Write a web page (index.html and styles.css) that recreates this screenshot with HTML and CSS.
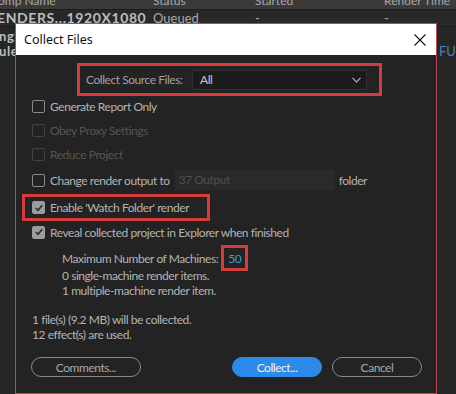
FILE: index.html
```html
<!DOCTYPE html>
<html>
<head>
<meta charset="utf-8">
<link rel="stylesheet" href="styles.css">
</head>
<body>
<div class="app">
  <div class="thead">
    <span class="c1">omp Name</span><span class="c2">Status</span><span class="c3">Started</span><span class="c4">Render Time</span>
  </div>
  <div class="trow">
    <span class="c1 bold">ENDERS...1920X1080</span><span class="c2">Queued</span><span class="c3">-</span><span class="c4">-</span>
  </div>
  <div class="side">
    <div class="bold">ngs</div>
    <div class="bold">ule</div>
  </div>
  <div class="ful">FUL</div>

  <div class="dialog">
    <div class="titlebar">
      <span class="title">Collect Files</span>
      <svg class="close" width="12" height="12" viewBox="0 0 12 12"><path d="M0.5 0.5 L11.5 11.5 M11.5 0.5 L0.5 11.5" stroke="#111" stroke-width="1.1" fill="none"/></svg>
    </div>
    <div class="body">
      <div class="source hl">
        <span class="src-label">Collect Source Files:</span>
        <div class="select"><span>All</span>
          <svg width="9" height="6" viewBox="0 0 9 6"><path d="M0.5 0.8 L4.5 4.8 L8.5 0.8" stroke="#b0b0b0" stroke-width="1.2" fill="none"/></svg>
        </div>
      </div>
      <div class="opt r1"><span class="cb"></span><span>Generate Report Only</span></div>
      <div class="opt r2 dis"><span class="cb"></span><span>Obey Proxy Settings</span></div>
      <div class="opt r3 dis"><span class="cb"></span><span>Reduce Project</span></div>
      <div class="opt r4"><span class="cb"></span><span>Change render output to</span><span class="field">37 Output</span><span class="folder">folder</span></div>
      <div class="opt r5 hl watch"><span class="cb on"><svg width="10" height="10" viewBox="0 0 10 10"><path d="M1.8 5 L4 7.3 L8.3 2.3" stroke="#2a2a2a" stroke-width="1.6" fill="none"/></svg></span><span>Enable 'Watch Folder' render</span></div>
      <div class="opt r6"><span class="cb on"><svg width="10" height="10" viewBox="0 0 10 10"><path d="M1.8 5 L4 7.3 L8.3 2.3" stroke="#2a2a2a" stroke-width="1.6" fill="none"/></svg></span><span>Reveal collected project in Explorer when finished</span></div>
      <div class="machines">
        <div class="maxrow"><span>Maximum Number of Machines:</span><span class="num hl">50</span></div>
        <div class="line">0 single-machine render items.</div>
        <div>1 multiple-machine render item.</div>
      </div>
      <div class="summary">
        <div>1 file(s) (9.2 MB) will be collected.</div>
        <div>12 effect(s) are used.</div>
      </div>
      <div class="buttons">
        <button class="btn">Comments...</button>
        <div class="right">
          <button class="btn primary">Collect...</button>
          <button class="btn">Cancel</button>
        </div>
      </div>
    </div>
  </div>
</div>
</body>
</html>
```
FILE: styles.css
```css
* { box-sizing: border-box; }
html, body { margin: 0; padding: 0; }
body {
  width: 456px; height: 394px; overflow: hidden;
  background: #262626;
  font-family: "Lato", "Open Sans", sans-serif;
  font-size: 12px;
  color: #b4b4b4;
}
.app { position: relative; width: 456px; height: 394px; }
.thead {
  height: 10px; background: #3a3a3a; position: relative;
  font-size: 12px; line-height: 10px; color: #a8a8a8; overflow: hidden;
  border-bottom: 1px solid #1c1c1c;
}
.thead span, .trow span { position: absolute; top: -4px; white-space: nowrap; }
.trow span { top: 0; }
.c1 { left: 0; }
.c2 { left: 153px; }
.c3 { left: 255px; }
.c4 { left: 384px; }
.thead .c1 { left: -2px; }
.trow {
  height: 17px; position: relative; background: #282828;
  line-height: 16px; font-size: 13px; color: #a8a8a8;
  border-bottom: 1px solid #1c1c1c;
}
.bold { font-weight: bold; color: #bdbdbd; letter-spacing: 0.6px; }
.trow .c1 { left: -3px; font-size: 14px; }
.side { padding-top: 2px; margin-left: -1px; font-size: 13px; line-height: 15px; }
.ful { position: absolute; left: 439px; top: 43px; color: #4a7fc8; font-size: 13px; }

.dialog {
  position: absolute; left: 15px; top: 23px; width: 422px; height: 371px;
  border: 1px solid #b8475a;
  background: #232323;
}
.titlebar {
  height: 31px; background: #ffffff; display: flex; align-items: center;
  justify-content: space-between; padding: 0 10px 0 8px;
}
.title { color: #111; font-family: "Noto Sans", "Open Sans", sans-serif; font-size: 12.5px; }
.close { margin-top: 1px; }
.body { padding: 8px 0 0 0; position: relative; letter-spacing: -0.45px; }
.hl { border: 3px solid #d83b3b; }
.source {
  margin-left: 61px; width: 305px; height: 33px;
  display: flex; align-items: center; padding-left: 6px; white-space: nowrap;
}
.src-label { color: #a0a0a0; width: 106px; }
.select {
  width: 175px; height: 20px; background: #1b1b1b; border: 1px solid #303030;
  display: flex; align-items: center; justify-content: space-between;
  padding: 0 5px 0 7px; color: #c8c8c8;
}
.opt { display: flex; align-items: center; height: 24px; padding-left: 16px; gap: 5px; white-space: nowrap; }
.cb {
  width: 13px; height: 13px; border: 1.5px solid #8a8a8a; border-radius: 2px;
  display: inline-flex; align-items: center; justify-content: center; flex: none;
}
.cb.on { background: #9c9c9c; border-color: #9c9c9c; }
.dis { color: #555; }
.dis .cb { border-color: #444; }
.r1 { height: 20px; }
.r2 { margin-top: 2px; }
.r4 { height: 28px; }
.field {
  width: 160px; height: 20px; background: #2a2a2a; color: #4e4e4e;
  padding-left: 4px; line-height: 20px;
}
.folder { margin-left: -1px; }
.watch { margin-left: 6px; width: 188px; height: 27px; padding-left: 7px; }
.r6 { height: 22px; }
.machines { padding-left: 46px; margin-top: 2px; line-height: 15px; }
.maxrow { display: flex; align-items: center; height: 26px; }
.line { margin-top: -3px; }
.num { color: #4a95d8; width: 27px; height: 26px; display: flex; align-items: center; justify-content: center; margin-left: 3px; }
.summary { padding-left: 16px; margin-top: 14px; line-height: 15px; }
.buttons { display: flex; justify-content: space-between; padding: 0 14px 0 15px; margin-top: 15px; }
.right { display: flex; gap: 10px; }
.btn {
  width: 110px; height: 20px; border-radius: 10px; border: 1px solid #8a8a8a;
  background: transparent; color: #a8a8a8; font-family: inherit; font-size: 12px; padding: 0;
  letter-spacing: inherit;
}
.right .btn { width: 90px; }
.btn.primary { background: #2c8ae8; border-color: #2c8ae8; color: #f2f2f2; }
```
